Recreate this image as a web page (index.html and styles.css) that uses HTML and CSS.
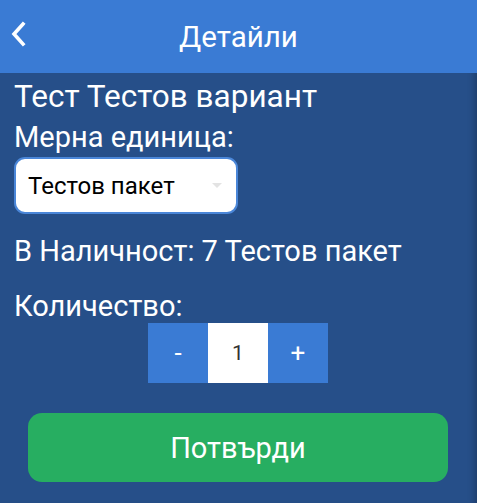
FILE: index.html
```html
<!DOCTYPE html>
<html lang="bg">
<head>
<meta charset="utf-8">
<title>Детайли</title>
<link rel="stylesheet" href="styles.css">
</head>
<body>
<div class="app">
  <header class="topbar">
    <button class="back" aria-label="Назад">
      <svg width="18" height="26" viewBox="0 0 18 26"><path d="M14 3 L5 13 L14 23" fill="none" stroke="#fff" stroke-width="3.6" stroke-linecap="square"/></svg>
    </button>
    <h1 class="title">Детайли</h1>
  </header>
  <main class="content">
    <div class="product">Тест Тестов вариант</div>
    <div class="label">Мерна единица:</div>
    <div class="select">
      <span>Тестов пакет</span>
      <span class="caret"></span>
    </div>
    <div class="stock">В Наличност: 7 Тестов пакет</div>
    <div class="label qty-label">Количество:</div>
    <div class="stepper">
      <button class="step">-</button>
      <div class="value">1</div>
      <button class="step">+</button>
    </div>
    <button class="confirm">Потвърди</button>
  </main>
</div>
</body>
</html>
```

FILE: styles.css
```css
* { box-sizing: border-box; }
html, body { margin: 0; height: 100%; }
body {
  background: #264f89;
  font-family: Roboto, "Noto Sans", sans-serif;
  color: #fff;
}
.app {
  min-height: 100%;
  display: flex;
  flex-direction: column;
  box-shadow: inset -7px 0 7px -5px rgba(0,0,0,0.25);
}
.topbar {
  height: 73px;
  background: #3a7bd4;
  display: flex;
  align-items: center;
  position: relative;
}
.back {
  position: absolute;
  left: 9px;
  top: 21px;
  background: none;
  border: 0;
  padding: 0;
  width: 18px;
  height: 26px;
  display: flex;
}
.title {
  flex: 1;
  margin: 0;
  text-align: center;
  font-weight: 400;
  font-size: 29.5px;
  color: #fff;
}
.content {
  padding: 5px 14px 0;
  display: flex;
  flex-direction: column;
}
.product {
  font-size: 31.5px;
  line-height: 38px;
}
.label, .stock {
  font-size: 29px;
  line-height: 34px;
}
.label { margin-top: 4px; }
.select {
  margin-top: 3px;
  width: 224px;
  height: 57px;
  background: #fff;
  border: 2px solid #4a86d8;
  border-radius: 11px;
  display: flex;
  align-items: center;
  justify-content: space-between;
  padding: 0 14px 0 12px;
  color: #000;
  font-size: 24px;
}
.caret {
  width: 0; height: 0;
  border-left: 5px solid transparent;
  border-right: 5px solid transparent;
  border-top: 5px solid #e3e3e3;
}
.stock { margin-top: 20px; }
.qty-label { margin-top: 21px; }
.stepper {
  display: flex;
  justify-content: center;
  margin-left: -1px;
}
.step, .value {
  width: 60px;
  height: 60px;
  display: flex;
  align-items: center;
  justify-content: center;
  border: 0;
  padding: 0;
  font-family: inherit;
}
.step {
  background: #3a7bd4;
  color: #fff;
  font-size: 26px;
}
.value {
  background: #fff;
  color: #333;
  font-size: 21px;
}
.confirm {
  margin: 30px 15px 0 14px;
  height: 69px;
  border: 0;
  border-radius: 14px;
  background: #27ae61;
  color: #fff;
  font-family: inherit;
  font-size: 29px;
}
```
